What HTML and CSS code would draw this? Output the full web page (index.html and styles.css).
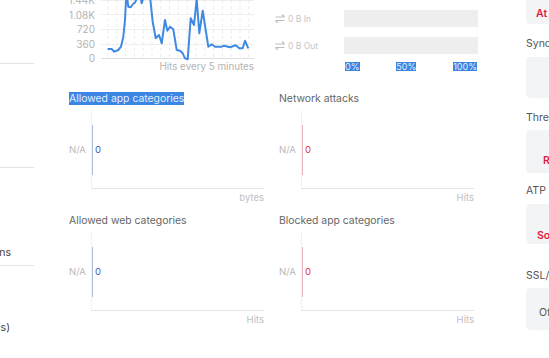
FILE: index.html
```html
<!DOCTYPE html>
<html lang="en">
<head>
    <meta charset="UTF-8">
    <meta name="viewport" content="width=device-width, initial-scale=1.0">
    <title>Dashboard</title>
    <link rel="stylesheet" href="styles.css">
</head>
<body>

<div class="page">
    <aside class="side">
        <div class="rule rule-1"></div>
        <div class="rule rule-2"></div>
        <div class="side-label label-1"><span>Connections</span></div>
        <div class="rule rule-3"></div>
        <div class="side-label label-2"><span>Live user(s)</span></div>
    </aside>

    <main class="center">
        <div class="top-row">
            <div class="hits-chart">
                <svg width="195" height="72" viewBox="0 0 195 72">
                    <g class="grid-h">
                        <line x1="32" y1="0.5" x2="185" y2="0.5"/>
                        <line x1="32" y1="14.5" x2="185" y2="14.5"/>
                        <line x1="32" y1="29.5" x2="185" y2="29.5"/>
                        <line x1="32" y1="44.5" x2="185" y2="44.5"/>
                    </g>
                    <g class="grid-v">
                        <line x1="39" y1="0" x2="39" y2="58"/>
                        <line x1="47.8" y1="0" x2="47.8" y2="58"/>
                        <line x1="56.6" y1="0" x2="56.6" y2="58"/>
                        <line x1="65.4" y1="0" x2="65.4" y2="58"/>
                        <line x1="74.2" y1="0" x2="74.2" y2="58"/>
                        <line x1="83" y1="0" x2="83" y2="58"/>
                        <line x1="91.8" y1="0" x2="91.8" y2="58"/>
                        <line x1="100.6" y1="0" x2="100.6" y2="58"/>
                        <line x1="109.4" y1="0" x2="109.4" y2="58"/>
                        <line x1="118.2" y1="0" x2="118.2" y2="58"/>
                        <line x1="127" y1="0" x2="127" y2="58"/>
                        <line x1="135.8" y1="0" x2="135.8" y2="58"/>
                        <line x1="144.6" y1="0" x2="144.6" y2="58"/>
                        <line x1="153.4" y1="0" x2="153.4" y2="58"/>
                        <line x1="162.2" y1="0" x2="162.2" y2="58"/>
                        <line x1="171" y1="0" x2="171" y2="58"/>
                        <line x1="179.8" y1="0" x2="179.8" y2="58"/>
                    </g>
                    <line class="axis" x1="32" y1="58.5" x2="185" y2="58.5"/>
                    <g class="y-labels">
                        <text x="26" y="3.5">1.44K</text>
                        <text x="26" y="18.5">1.08K</text>
                        <text x="26" y="33">720</text>
                        <text x="26" y="47.5">360</text>
                        <text x="26" y="62">0</text>
                    </g>
                    <polyline class="hits-line" points="38.7,49 42.7,49 45.3,51.7 49.3,50 52,46.7 54.3,36.7 56,20 57,0 58,-3 59.3,6.7 61.7,7.3 64,4 66,2.7 68,-2 71,-6 72.7,3.3 74.3,-2 77,-15 80.3,-10 83.7,21.7 86.7,38.3 90,35 92.7,43.3 96,20 98.3,30.7 101,26.7 104.3,29.3 107.7,50 111,50.7 113.7,53.3 116,58.3 118.7,59.3 121.7,18.3 125,25 127.7,-1 130.3,33.3 133.7,10.7 136.7,30 139.3,46.7 142.7,44.3 146,46.7 152.7,46.7 155,45.7 161,47.3 166.7,45.3 170.3,48.3 173.7,48.3 176,40.7 179.3,48.3"/>
                    <text class="caption" x="185" y="70">Hits every 5 minutes</text>
                </svg>
            </div>

            <div class="traffic">
                <div class="traffic-row">
                    <div class="traffic-label">
                        <svg class="swap" width="10" height="9" viewBox="0 0 10 9"><path d="M0.5 3H9.5M7 0.5L9.5 3M0.5 6.5H9.5M3 9L0.5 6.5"/></svg>
                        <span>0 B In</span>
                    </div>
                    <div class="traffic-bar"></div>
                </div>
                <div class="traffic-row">
                    <div class="traffic-label">
                        <svg class="swap" width="10" height="9" viewBox="0 0 10 9"><path d="M0.5 3H9.5M7 0.5L9.5 3M0.5 6.5H9.5M3 9L0.5 6.5"/></svg>
                        <span>0 B Out</span>
                    </div>
                    <div class="traffic-bar"></div>
                </div>
                <div class="scale">
                    <span class="selected">0%</span>
                    <span class="selected">50%</span>
                    <span class="selected">100%</span>
                </div>
            </div>
        </div>

        <div class="widgets">
            <div class="widget">
                <div class="widget-title"><span class="selected">Allowed app categories</span></div>
                <div class="plot-row">
                    <div class="na">N/A</div>
                    <div class="plot">
                        <div class="bar blue"></div>
                        <span class="value blue">0</span>
                    </div>
                </div>
                <div class="unit">bytes</div>
            </div>
            <div class="widget">
                <div class="widget-title">Network attacks</div>
                <div class="plot-row">
                    <div class="na">N/A</div>
                    <div class="plot">
                        <div class="bar red"></div>
                        <span class="value red">0</span>
                    </div>
                </div>
                <div class="unit">Hits</div>
            </div>
            <div class="widget">
                <div class="widget-title">Allowed web categories</div>
                <div class="plot-row">
                    <div class="na">N/A</div>
                    <div class="plot">
                        <div class="bar blue"></div>
                        <span class="value blue">0</span>
                    </div>
                </div>
                <div class="unit">Hits</div>
            </div>
            <div class="widget">
                <div class="widget-title">Blocked app categories</div>
                <div class="plot-row">
                    <div class="na">N/A</div>
                    <div class="plot">
                        <div class="bar red"></div>
                        <span class="value red">0</span>
                    </div>
                </div>
                <div class="unit">Hits</div>
            </div>
        </div>
    </main>

    <aside class="status">
        <div class="status-card card-risk">
            <svg class="risk-icon" width="14" height="14" viewBox="0 0 14 14"><circle cx="7" cy="7" r="5.5"/></svg>
            <span class="alert">At risk</span>
        </div>
        <div class="status-title title-sync">Synchronized Security</div>
        <div class="status-card card-sync"></div>
        <div class="status-title title-threat">Threat feeds</div>
        <div class="status-card card-threat"><span class="alert">Red</span></div>
        <div class="status-title title-atp">ATP</div>
        <div class="status-card card-atp"><span class="alert">Some</span></div>
        <div class="status-title title-ssl">SSL/TLS connections</div>
        <div class="status-card card-ssl"><span class="off">Off</span></div>
    </aside>
</div>

</body>
</html>
```

FILE: styles.css
```css
body {
    margin: 0;
    font-family: Inter, "Noto Sans", sans-serif;
    background-color: #fff;
    overflow: hidden;
    width: 549px;
    height: 358px;
}
.page {
    display: flex;
    align-items: flex-start;
}

/* left column, cut off by the window */
.side {
    width: 34px;
    flex-shrink: 0;
}
.rule {
    height: 1px;
    background-color: #e4e4e4;
}
.rule-1 { margin-top: 63px; }
.rule-2 { margin-top: 103px; }
.rule-3 { margin-top: 5px; }
.side-label {
    display: flex;
    justify-content: flex-end;
    width: 11px;
    white-space: nowrap;
    font-size: 10.5px;
    line-height: 14px;
    color: #444;
}
.label-1 { margin-top: 78px; }
.label-2 { margin-top: 55px; width: 10px; }

/* middle */
.center {
    width: 405px;
    margin-left: 35px;
    flex-shrink: 0;
}
.top-row {
    display: flex;
    height: 72px;
}
.hits-chart svg {
    display: block;
}
.grid-h line {
    stroke: #eeeeee;
    stroke-width: 1;
}
.grid-v line {
    stroke: #ebebeb;
    stroke-width: 1;
    stroke-dasharray: 3 3;
}
.axis {
    stroke: #dedede;
    stroke-width: 1;
}
.y-labels text {
    font-size: 10px;
    fill: #b3b3b3;
    text-anchor: end;
}
.caption {
    font-size: 9.8px;
    fill: #b3b3b3;
    text-anchor: end;
}
.hits-line {
    fill: none;
    stroke: #3f89e3;
    stroke-width: 2;
    stroke-linejoin: round;
}

.traffic {
    margin-left: 11px;
    width: 203px;
    padding-top: 10px;
}
.traffic-row {
    display: flex;
    align-items: center;
    height: 17px;
    margin-bottom: 10px;
}
.traffic-label {
    width: 69px;
    display: flex;
    align-items: center;
    gap: 3px;
    font-size: 8.5px;
    color: #c6c6c6;
}
.swap path {
    fill: none;
    stroke: #bdbdbd;
    stroke-width: 1.2;
}
.traffic-bar {
    width: 134px;
    height: 17px;
    background-color: #eeeeee;
}
.scale {
    display: flex;
    justify-content: space-between;
    margin-left: 70px;
    width: 132px;
    margin-top: -2px;
    font-size: 9px;
    line-height: 9px;
}
.selected {
    background-color: #3b85e3;
    color: #e4edf9;
}

.widgets {
    display: grid;
    grid-template-columns: 195px 195px;
    column-gap: 15px;
    row-gap: 9px;
    margin-top: 20px;
}
.widget-title {
    font-size: 10.4px;
    line-height: 14px;
    color: #666;
}
.plot-row {
    display: flex;
    align-items: center;
    height: 79px;
    margin-top: 4px;
}
.na {
    width: 22px;
    font-size: 9.5px;
    color: #b8b8b8;
}
.plot {
    flex: 1;
    align-self: stretch;
    display: flex;
    align-items: center;
    border-left: 1px solid #f1f1f1;
    border-bottom: 1px solid #e3e3e3;
}
.bar {
    width: 1px;
    height: 50px;
    margin-top: 1px;
}
.bar.blue { background-color: #a9bfe2; }
.bar.red { background-color: #ebb5bd; }
.value {
    margin-left: 2px;
    font-size: 9.5px;
}
.value.blue { color: #3a5fb0; }
.value.red { color: #e5324d; }
.unit {
    text-align: right;
    font-size: 9.5px;
    line-height: 14px;
    color: #c0c0c0;
    margin-top: 2px;
}

/* right column */
.status {
    margin-left: 52px;
    width: 200px;
    flex-shrink: 0;
}
.status-card {
    position: relative;
    background-color: #f3f4f6;
    border-radius: 4px;
    box-sizing: border-box;
    font-size: 10.5px;
    line-height: 14px;
}
.status-title {
    font-size: 10.5px;
    line-height: 14px;
    color: #555;
    white-space: nowrap;
}
.alert {
    color: #e11d3f;
    font-weight: 600;
}
.off {
    color: #555;
}
.card-risk {
    margin-top: -18px;
    height: 42px;
    padding: 0 0 3px 10px;
    display: flex;
    align-items: flex-end;
}
.risk-icon {
    position: absolute;
    left: 17px;
    top: 4px;
}
.risk-icon circle {
    fill: none;
    stroke: #e11d3f;
    stroke-width: 1.6;
}
.title-sync { margin-top: 13px; }
.card-sync {
    margin-top: 6px;
    height: 41px;
}
.title-threat { margin-top: 13px; }
.card-threat {
    margin-top: 5px;
    height: 43px;
    padding: 24px 0 0 17px;
}
.title-atp { margin-top: 11px; }
.card-atp {
    margin-top: 6px;
    height: 40px;
    padding: 25px 0 0 11px;
}
.title-ssl { margin-top: 25px; }
.card-ssl {
    margin-top: 5px;
    height: 42px;
    padding: 18px 0 0 13px;
}
```
